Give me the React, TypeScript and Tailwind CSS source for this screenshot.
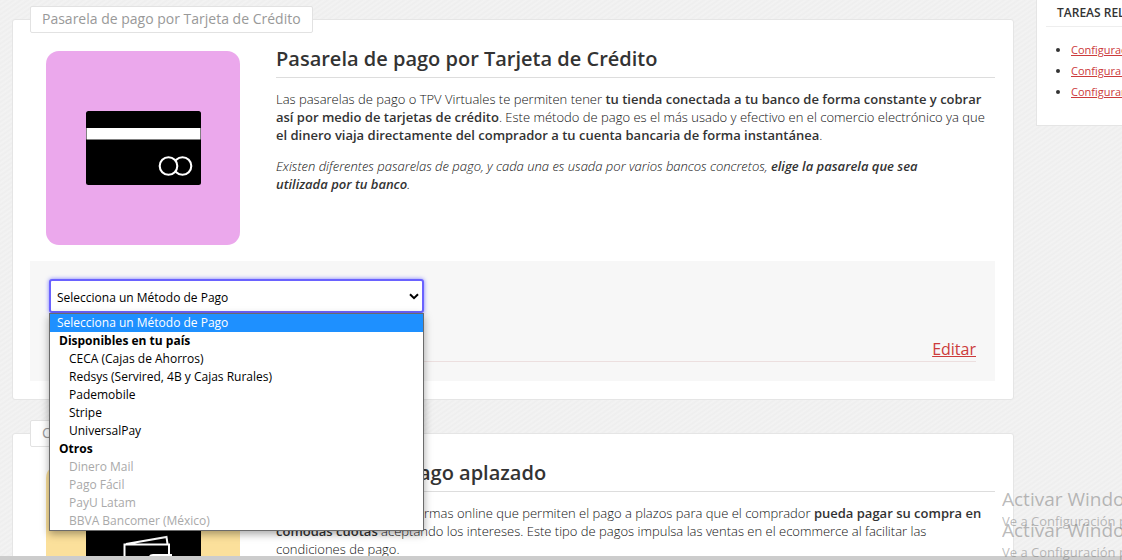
import type { ReactNode } from "react";

const available = [
  "CECA (Cajas de Ahorros)",
  "Redsys (Servired, 4B y Cajas Rurales)",
  "Pademobile",
  "Stripe",
  "UniversalPay",
];
const others = ["Dinero Mail", "Pago Fácil", "PayU Latam", "BBVA Bancomer (México)"];
const tasks = ["Configuración de pagos", "Configura los envíos", "Configurar la tienda"];

function CardPicture() {
  return (
    <svg viewBox="0 0 194 194" className="size-[194px] shrink-0" aria-hidden="true">
      <rect width="194" height="194" rx="13" fill="#eba8ec" />
      <rect x="40" y="60" width="115" height="74" rx="2.5" fill="#000" />
      <rect x="40.5" y="77" width="114" height="11.5" fill="#fff" />
      <circle cx="136.5" cy="115" r="8.8" fill="none" stroke="#fff" strokeWidth="2.1" />
      <circle cx="122.5" cy="115" r="8.8" fill="#000" stroke="#fff" strokeWidth="2.1" />
    </svg>
  );
}

function CashPicture() {
  return (
    <svg viewBox="0 0 194 194" className="size-[194px] shrink-0" aria-hidden="true">
      <rect width="194" height="194" rx="13" fill="#fbe09b" />
      <rect x="40" y="40" width="115" height="115" rx="2.5" fill="#000" />
      <path d="M78.5 100V79.5H123V125H78.5V100M80 79L120.5 72L121.5 79" fill="none" stroke="#fff" strokeWidth="2" />
      <path d="M103 91Q104 89 107 89H126V99H107Q103 99 103 95Z" fill="#fff" />
    </svg>
  );
}

function Strong({ children }: { children: ReactNode }) {
  return <strong className="font-semibold text-[#333]">{children}</strong>;
}

function Panel({ legend, title, picture, children, footer }: {
  legend: string;
  title: string;
  picture: ReactNode;
  children: ReactNode;
  footer?: ReactNode;
}) {
  return (
    <section className="rounded-[3px] border border-[#e5e5e5] bg-white pr-[18px] pb-[18px] pl-[17px]">
      <div className="-mt-[14px] flex">
        <span className="rounded-[2px] border border-[#e2e2e2] bg-white px-[11px] pt-px pb-[3px] text-[14px] leading-[21px] text-[#999]">
          {legend}
        </span>
      </div>
      <div className="mt-[18px] flex gap-9 pl-4">
        {picture}
        <div className="min-w-0 flex-1">
          <h2 className="mb-3 border-b border-[#ddd] pt-px pb-[11px] text-[20px] leading-[14px] font-semibold">
            {title}
          </h2>
          {children}
        </div>
      </div>
      {footer}
    </section>
  );
}

function MethodPicker() {
  return (
    <div className="relative w-[375px] text-[12px] text-black">
      <select
        id="method"
        aria-label="Método de Pago"
        className="block h-[34px] w-full appearance-none rounded-[3px] border-2 border-[#6a62ff] bg-white pt-1 pl-[6px] shadow-[0_0_4px_#7a7aff] outline-none"
      >
        <option>Selecciona un Método de Pago</option>
      </select>
      <svg viewBox="0 0 10 7" className="pointer-events-none absolute top-[14px] right-[5px] h-[7px] w-[10px]" aria-hidden="true">
        <path d="M1 1.2L5 5.2L9 1.2" fill="none" stroke="#000" strokeWidth="2" />
      </svg>
      <ul
        role="listbox"
        aria-label="Métodos de Pago"
        className="absolute top-[34px] left-0 z-10 w-full border border-[#6b6b6b] bg-white leading-[18px] shadow-[0_3px_8px_rgba(0,0,0,0.35)]"
      >
        <li role="option" aria-selected="true" className="bg-[#1e90ff] pl-[7px] text-white">
          Selecciona un Método de Pago
        </li>
        <li className="pl-[9px] font-bold">Disponibles en tu país</li>
        {available.map((name) => (
          <li key={name} role="option" aria-selected="false" className="pl-[19px]">{name}</li>
        ))}
        <li className="pl-[9px] font-bold">Otros</li>
        {others.map((name) => (
          <li key={name} role="option" aria-selected="false" aria-disabled="true" className="pl-[19px] text-[#a9a9a9]">
            {name}
          </li>
        ))}
      </ul>
    </div>
  );
}

function ActivationNotice() {
  return (
    <div className="whitespace-nowrap">
      <p className="text-[19px] leading-[28px]">Activar Windows</p>
      <p className="text-[13px] leading-[16px]">Ve a Configuración para activar Windows.</p>
    </div>
  );
}

export default function App() {
  return (
    <div className="relative flex h-screen flex-col overflow-hidden bg-[#f1f1f1] bg-[repeating-linear-gradient(145deg,#eeeeee_0px,#f3f3f3_2px,#eeeeee_4px)] font-['Open_Sans',sans-serif] text-[13px] leading-[18px] text-[#333]">
      <div className="flex min-h-0 flex-1 items-start gap-[22px] overflow-hidden pl-3">
        <main className="flex min-w-0 flex-1 flex-col gap-[33px] pt-[19px]">
          <Panel
            legend="Pasarela de pago por Tarjeta de Crédito"
            title="Pasarela de pago por Tarjeta de Crédito"
            picture={<CardPicture />}
            footer={
              <div className="mt-4 h-[120px] bg-[#f7f7f7] px-[19px] pt-[18px]">
                <MethodPicker />
                <div className="mt-6 flex justify-end border-b border-[#ecdfdf] text-[16px] leading-6">
                  <a href="#editar" className="text-[#cc3b3b] underline">Editar</a>
                </div>
              </div>
            }
          >
            <p className="mb-[13px] font-light text-[#111]">
              Las pasarelas de pago o TPV Virtuales te permiten tener <Strong>tu tienda conectada a tu banco de forma constante y cobrar así por medio de tarjetas de crédito</Strong>. Este método de pago es el más usado y efectivo en el comercio electrónico ya que <Strong>el dinero viaja directamente del comprador a tu cuenta bancaria de forma instantánea</Strong>.
            </p>
            <p className="pr-9 font-light text-[#111] italic">
              Existen diferentes pasarelas de pago, y cada una es usada por varios bancos concretos, <Strong>elige la pasarela que sea utilizada por tu banco</Strong>.
            </p>
          </Panel>
          <Panel legend="Comprar con pago aplazado" title="Comprar con pago aplazado" picture={<CashPicture />}>
            <p className="font-light text-[#111]">
              Existen diferentes plataformas online que permiten el pago a plazos para que el comprador <Strong>pueda pagar su compra en cómodas cuotas</Strong> aceptando los intereses. Este tipo de pagos impulsa las ventas en el ecommerce al facilitar las condiciones de pago.
            </p>
          </Panel>
        </main>
        <aside className="w-[86px] shrink-0 overflow-hidden border-b border-l border-[#e5e5e5] bg-white pb-[23px] pl-[9px] text-[12px] whitespace-nowrap">
          <h3 className="border-b border-[#eee] pt-1 pb-1 pl-[11px] font-semibold">TAREAS RELACIONADAS</h3>
          <ul className="mt-3 list-disc pl-[25px] text-[11px] leading-[21px]">
            {tasks.map((task) => (
              <li key={task}><a href="#tareas" className="text-[#cc3b3b] underline">{task}</a></li>
            ))}
          </ul>
        </aside>
      </div>
      <div className="pointer-events-none absolute right-0 bottom-0 w-[120px] overflow-hidden text-[#777]/50">
        <div className="-mb-[13px]"><ActivationNotice /></div>
        <ActivationNotice />
      </div>
      <div className="h-1 shrink-0 bg-[#ccc]" />
    </div>
  );
}
